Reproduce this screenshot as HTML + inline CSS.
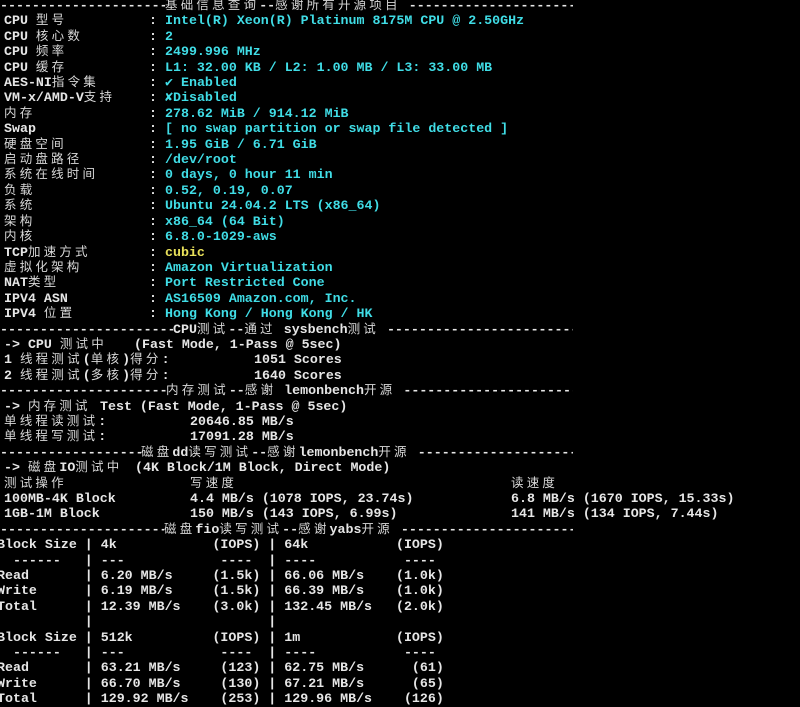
<!DOCTYPE html>
<html><head><meta charset="utf-8">
<style>
html,body{margin:0;padding:0;background:#000;width:800px;height:707px;overflow:hidden}
#t{position:absolute;left:0;top:-2px;width:800px;font-family:"Liberation Mono",monospace;font-weight:bold;font-size:13.3px;color:#e6e6e6}
.l{position:relative;height:15.42px;line-height:15.42px;white-space:pre}
.l span.a{position:absolute;top:0}
.c{font-family:"Noto Sans CJK SC",sans-serif;font-weight:normal;font-size:12.5px;letter-spacing:3.2px;color:#d8d8d8;line-height:0;vertical-align:baseline}
.v{color:#40dde6}
.y{color:#e8e05a}
.sep{display:flex;white-space:pre;width:573px;overflow:hidden}
.d{overflow:hidden;white-space:pre}
.f{flex:1;overflow:hidden;white-space:pre}
.fio{left:-3px}
</style></head><body>
<div id="t">
<div class="l sep"><span class="d" style="width:165px">------------------------</span><span><span class="c">基础信息查询</span>--<span class="c">感谢所有开源项目</span> </span><span class="f">--------------------------------</span></div>
<div class="l"><span class="a" style="left:4px">CPU <span class="c">型号</span></span><span class="a" style="left:149px">:</span><span class="a v" style="left:165px">Intel(R) Xeon(R) Platinum 8175M CPU @ 2.50GHz</span></div>
<div class="l"><span class="a" style="left:4px">CPU <span class="c">核心数</span></span><span class="a" style="left:149px">:</span><span class="a v" style="left:165px">2</span></div>
<div class="l"><span class="a" style="left:4px">CPU <span class="c">频率</span></span><span class="a" style="left:149px">:</span><span class="a v" style="left:165px">2499.996 MHz</span></div>
<div class="l"><span class="a" style="left:4px">CPU <span class="c">缓存</span></span><span class="a" style="left:149px">:</span><span class="a v" style="left:165px">L1: 32.00 KB / L2: 1.00 MB / L3: 33.00 MB</span></div>
<div class="l"><span class="a" style="left:4px">AES-NI<span class="c">指令集</span></span><span class="a" style="left:149px">:</span><span class="a v" style="left:165px">✔ Enabled</span></div>
<div class="l"><span class="a" style="left:4px">VM-x/AMD-V<span class="c">支持</span></span><span class="a" style="left:149px">:</span><span class="a v" style="left:165px">✘Disabled</span></div>
<div class="l"><span class="a" style="left:4px"><span class="c">内存</span></span><span class="a" style="left:149px">:</span><span class="a v" style="left:165px">278.62 MiB / 914.12 MiB</span></div>
<div class="l"><span class="a" style="left:4px">Swap</span><span class="a" style="left:149px">:</span><span class="a v" style="left:165px">[ no swap partition or swap file detected ]</span></div>
<div class="l"><span class="a" style="left:4px"><span class="c">硬盘空间</span></span><span class="a" style="left:149px">:</span><span class="a v" style="left:165px">1.95 GiB / 6.71 GiB</span></div>
<div class="l"><span class="a" style="left:4px"><span class="c">启动盘路径</span></span><span class="a" style="left:149px">:</span><span class="a v" style="left:165px">/dev/root</span></div>
<div class="l"><span class="a" style="left:4px"><span class="c">系统在线时间</span></span><span class="a" style="left:149px">:</span><span class="a v" style="left:165px">0 days, 0 hour 11 min</span></div>
<div class="l"><span class="a" style="left:4px"><span class="c">负载</span></span><span class="a" style="left:149px">:</span><span class="a v" style="left:165px">0.52, 0.19, 0.07</span></div>
<div class="l"><span class="a" style="left:4px"><span class="c">系统</span></span><span class="a" style="left:149px">:</span><span class="a v" style="left:165px">Ubuntu 24.04.2 LTS (x86_64)</span></div>
<div class="l"><span class="a" style="left:4px"><span class="c">架构</span></span><span class="a" style="left:149px">:</span><span class="a v" style="left:165px">x86_64 (64 Bit)</span></div>
<div class="l"><span class="a" style="left:4px"><span class="c">内核</span></span><span class="a" style="left:149px">:</span><span class="a v" style="left:165px">6.8.0-1029-aws</span></div>
<div class="l"><span class="a" style="left:4px">TCP<span class="c">加速方式</span></span><span class="a" style="left:149px">:</span><span class="a y" style="left:165px">cubic</span></div>
<div class="l"><span class="a" style="left:4px"><span class="c">虚拟化架构</span></span><span class="a" style="left:149px">:</span><span class="a v" style="left:165px">Amazon Virtualization</span></div>
<div class="l"><span class="a" style="left:4px">NAT<span class="c">类型</span></span><span class="a" style="left:149px">:</span><span class="a v" style="left:165px">Port Restricted Cone</span></div>
<div class="l"><span class="a" style="left:4px">IPV4 ASN</span><span class="a" style="left:149px">:</span><span class="a v" style="left:165px">AS16509 Amazon.com, Inc.</span></div>
<div class="l"><span class="a" style="left:4px">IPV4 <span class="c">位置</span></span><span class="a" style="left:149px">:</span><span class="a v" style="left:165px">Hong Kong / Hong Kong / HK</span></div>
<div class="l sep"><span class="d" style="width:173px">------------------------</span><span>CPU<span class="c">测试</span>--<span class="c">通过</span> sysbench<span class="c">测试</span> </span><span class="f">--------------------------------</span></div>
<div class="l"><span class="a" style="left:4px">-&gt; CPU <span class="c">测试中</span></span><span class="a" style="left:134px">(Fast Mode, 1-Pass @ 5sec)</span></div>
<div class="l"><span class="a" style="left:4px">1 <span class="c">线程测试</span>(<span class="c">单核</span>)<span class="c">得分</span>:</span><span class="a" style="left:254px">1051 Scores</span></div>
<div class="l"><span class="a" style="left:4px">2 <span class="c">线程测试</span>(<span class="c">多核</span>)<span class="c">得分</span>:</span><span class="a" style="left:254px">1640 Scores</span></div>
<div class="l sep"><span class="d" style="width:166px">------------------------</span><span><span class="c">内存测试</span>--<span class="c">感谢</span> lemonbench<span class="c">开源</span> </span><span class="f">--------------------------------</span></div>
<div class="l"><span class="a" style="left:4px">-&gt; <span class="c">内存测试</span></span><span class="a" style="left:100px">Test (Fast Mode, 1-Pass @ 5sec)</span></div>
<div class="l"><span class="a" style="left:4px"><span class="c">单线程读测试</span>:</span><span class="a" style="left:190px">20646.85 MB/s</span></div>
<div class="l"><span class="a" style="left:4px"><span class="c">单线程写测试</span>:</span><span class="a" style="left:190px">17091.28 MB/s</span></div>
<div class="l sep"><span class="d" style="width:141px">------------------------</span><span><span class="c">磁盘</span>dd<span class="c">读写测试</span>--<span class="c">感谢</span>lemonbench<span class="c">开源</span> </span><span class="f">--------------------------------</span></div>
<div class="l"><span class="a" style="left:4px">-&gt; <span class="c">磁盘</span>IO<span class="c">测试中</span></span><span class="a" style="left:135px">(4K Block/1M Block, Direct Mode)</span></div>
<div class="l"><span class="a" style="left:4px"><span class="c">测试操作</span></span><span class="a" style="left:190px"><span class="c">写速度</span></span><span class="a" style="left:511px"><span class="c">读速度</span></span></div>
<div class="l"><span class="a" style="left:4px">100MB-4K Block</span><span class="a" style="left:190px">4.4 MB/s (1078 IOPS, 23.74s)</span><span class="a" style="left:511px">6.8 MB/s (1670 IOPS, 15.33s)</span></div>
<div class="l"><span class="a" style="left:4px">1GB-1M Block</span><span class="a" style="left:190px">150 MB/s (143 IOPS, 6.99s)</span><span class="a" style="left:511px">141 MB/s (134 IOPS, 7.44s)</span></div>
<div class="l sep"><span class="d" style="width:164px">------------------------</span><span><span class="c">磁盘</span>fio<span class="c">读写测试</span>--<span class="c">感谢</span>yabs<span class="c">开源</span> </span><span class="f">--------------------------------</span></div>
<div class="l"><span class="a fio">Block Size | 4k            (IOPS) | 64k           (IOPS)</span></div>
<div class="l"><span class="a fio">  ------   | ---            ----  | ----           ----</span></div>
<div class="l"><span class="a fio">Read       | 6.20 MB/s     (1.5k) | 66.06 MB/s    (1.0k)</span></div>
<div class="l"><span class="a fio">Write      | 6.19 MB/s     (1.5k) | 66.39 MB/s    (1.0k)</span></div>
<div class="l"><span class="a fio">Total      | 12.39 MB/s    (3.0k) | 132.45 MB/s   (2.0k)</span></div>
<div class="l"><span class="a fio">           |                      |</span></div>
<div class="l"><span class="a fio">Block Size | 512k          (IOPS) | 1m            (IOPS)</span></div>
<div class="l"><span class="a fio">  ------   | ---            ----  | ----           ----</span></div>
<div class="l"><span class="a fio">Read       | 63.21 MB/s     (123) | 62.75 MB/s      (61)</span></div>
<div class="l"><span class="a fio">Write      | 66.70 MB/s     (130) | 67.21 MB/s      (65)</span></div>
<div class="l"><span class="a fio">Total      | 129.92 MB/s    (253) | 129.96 MB/s    (126)</span></div>
</div>
</body></html>
